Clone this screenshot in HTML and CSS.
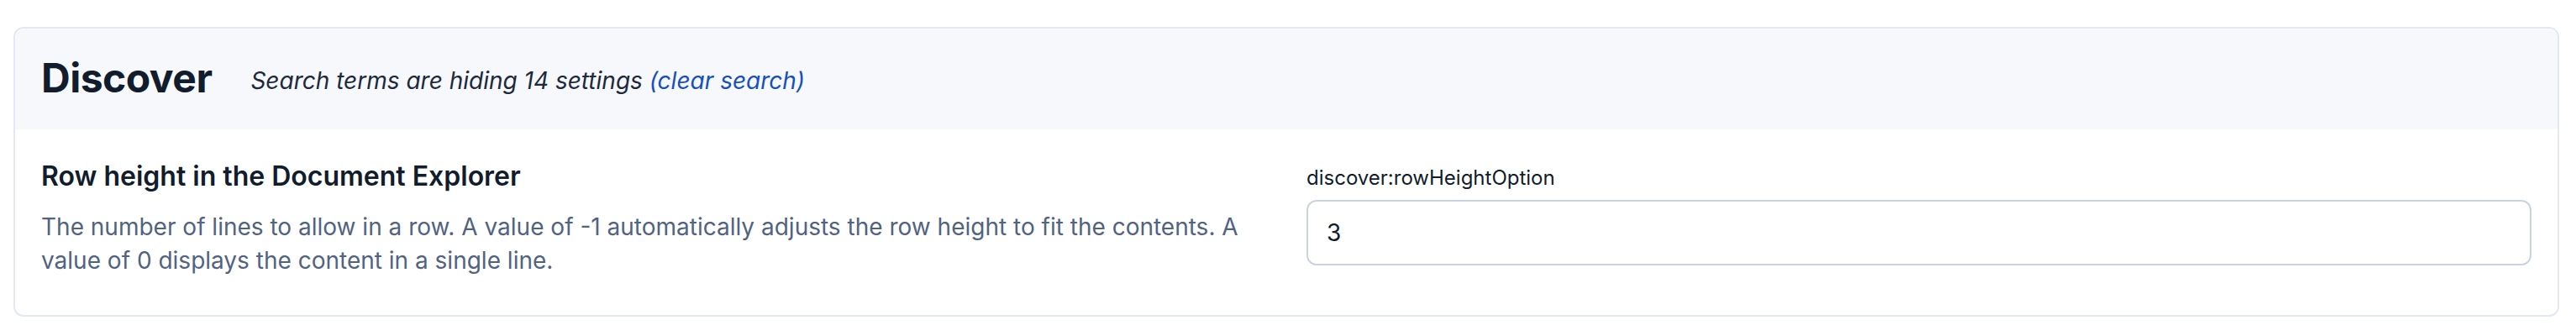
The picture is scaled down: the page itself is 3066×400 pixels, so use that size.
FILE: index.html
```html
<!DOCTYPE html>
<html lang="en">
<head>
<meta charset="utf-8">
<title>Discover settings</title>
<link rel="stylesheet" href="styles.css">
</head>
<body>
<div class="page">
  <section class="card">
    <header class="card-header">
      <h2 class="card-title">Discover</h2>
      <p class="card-subtitle">Search terms are hiding 14 settings <a class="link" href="#">(clear search)</a></p>
    </header>
    <div class="card-body">
      <div class="setting-row">
        <div class="setting-info">
          <h3 class="setting-title">Row height in the Document Explorer</h3>
          <p class="setting-desc">The number of lines to allow in a row. A value of -1 automatically adjusts the row height to fit the contents. A value of 0 displays the content in a single line.</p>
        </div>
        <div class="setting-field">
          <label class="field-label" for="rh">discover:rowHeightOption</label>
          <input class="field-input" id="rh" type="text" value="3">
        </div>
      </div>
    </div>
  </section>
</div>
</body>
</html>
```

FILE: styles.css
```css
* { box-sizing: border-box; }
html, body { margin: 0; padding: 0; background: #ffffff; }
body {
  font-family: Inter, "Noto Sans", "Liberation Sans", sans-serif;
  color: #111c2c;
}
.page {
  padding: 32px 20px 0 16px;
}
.card {
  border: 2px solid #e3e8f2;
  border-radius: 12px;
  overflow: hidden;
  background: #ffffff;
}
.card-header {
  background: #f6f8fc;
  display: flex;
  align-items: center;
  gap: 46px;
  padding: 31px 32px 33px 31px;
}
.card-title {
  margin: 0;
  font-size: 48px;
  line-height: 56px;
  font-weight: 700;
  color: #111c2c;
  letter-spacing: -0.5px;
}
.card-subtitle {
  margin: 6px 0 0 0;
  font-size: 28px;
  line-height: 40px;
  font-style: italic;
  color: #1d2a3e;
}
.link {
  color: #1750ba;
  text-decoration: none;
}
.card-body {
  padding: 32px 31px 45px 31px;
}
.setting-row {
  display: grid;
  grid-template-columns: 1fr 1fr;
  column-gap: 48px;
}
.setting-title {
  margin: 0;
  font-size: 32px;
  line-height: 48px;
  font-weight: 600;
  color: #111c2c;
}
.setting-desc {
  margin: 16px 0 0 0;
  font-size: 28px;
  line-height: 40px;
  color: #516381;
}
.setting-field {
  display: flex;
  flex-direction: column;
  padding-top: 10px;
}
.field-label {
  font-size: 24px;
  line-height: 32px;
  font-weight: 400;
  color: #111c2c;
  margin-bottom: 10px;
}
.field-input {
  width: 100%;
  height: 78px;
  border: 2px solid #cad3e2;
  border-radius: 12px;
  padding: 0 22px;
  font-family: Inter, "Noto Sans", "Liberation Sans", sans-serif;
  font-size: 28px;
  color: #111c2c;
  background: #ffffff;
  outline: none;
}
```
